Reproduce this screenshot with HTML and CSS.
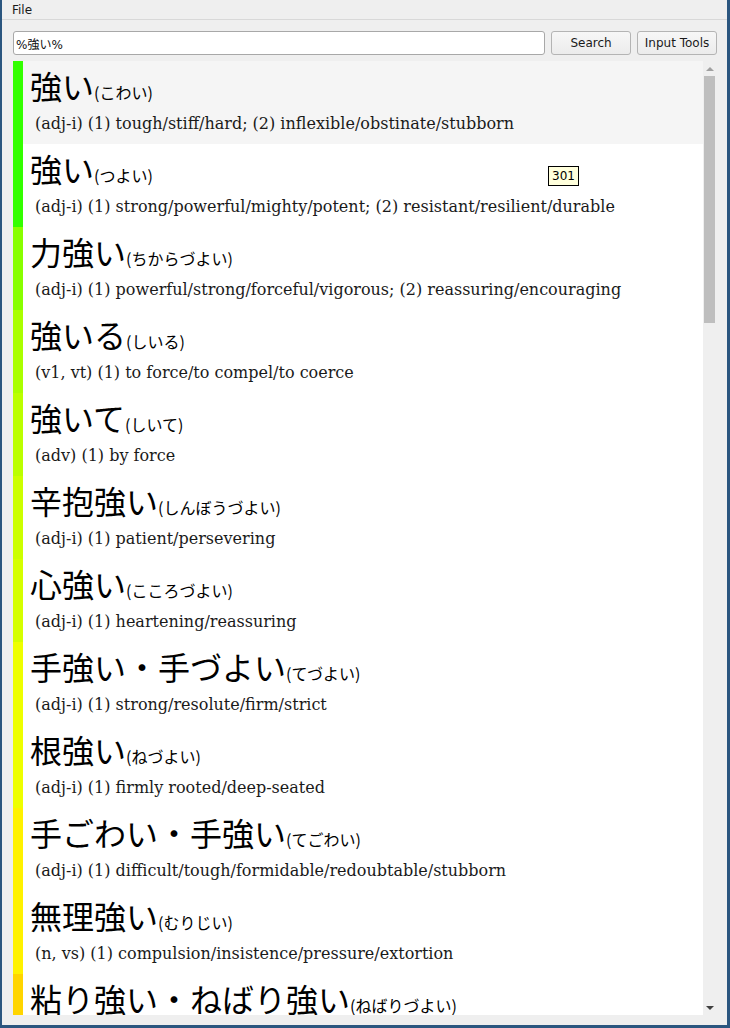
FILE: index.html
```html
<!DOCTYPE html>
<html>
<head>
<meta charset="utf-8">
<link rel="stylesheet" href="styles.css">
</head>
<body>
<div class="window">
  <div class="menubar"><span class="menu-item">File</span></div>
  <div class="toolbar">
    <div class="search-input">%強い%</div>
    <div class="btn">Search</div>
    <div class="btn">Input Tools</div>
  </div>
  <div class="list">
    <div class="entries">
      <div class="entry hover"><div class="bar" style="background:#33ff00"></div><div class="body"><div class="head"><span class="word">強い</span><span class="reading">(こわい)</span></div><div class="def">(adj-i) (1) tough/stiff/hard; (2) inflexible/obstinate/stubborn</div></div></div>
      <div class="entry"><div class="bar" style="background:#33ff00"></div><div class="body"><div class="head"><span class="word">強い</span><span class="reading">(つよい)</span></div><div class="def">(adj-i) (1) strong/powerful/mighty/potent; (2) resistant/resilient/durable</div></div></div>
      <div class="entry"><div class="bar" style="background:#88ff00"></div><div class="body"><div class="head"><span class="word">力強い</span><span class="reading">(ちからづよい)</span></div><div class="def">(adj-i) (1) powerful/strong/forceful/vigorous; (2) reassuring/encouraging</div></div></div>
      <div class="entry"><div class="bar" style="background:#aaff00"></div><div class="body"><div class="head"><span class="word">強いる</span><span class="reading">(しいる)</span></div><div class="def">(v1, vt) (1) to force/to compel/to coerce</div></div></div>
      <div class="entry"><div class="bar" style="background:#bbff00"></div><div class="body"><div class="head"><span class="word">強いて</span><span class="reading">(しいて)</span></div><div class="def">(adv) (1) by force</div></div></div>
      <div class="entry"><div class="bar" style="background:#ccff00"></div><div class="body"><div class="head"><span class="word">辛抱強い</span><span class="reading">(しんぼうづよい)</span></div><div class="def">(adj-i) (1) patient/persevering</div></div></div>
      <div class="entry"><div class="bar" style="background:#d5ff00"></div><div class="body"><div class="head"><span class="word">心強い</span><span class="reading">(こころづよい)</span></div><div class="def">(adj-i) (1) heartening/reassuring</div></div></div>
      <div class="entry"><div class="bar" style="background:#eeff00"></div><div class="body"><div class="head"><span class="word">手強い・手づよい</span><span class="reading">(てづよい)</span></div><div class="def">(adj-i) (1) strong/resolute/firm/strict</div></div></div>
      <div class="entry"><div class="bar" style="background:#eeff00"></div><div class="body"><div class="head"><span class="word">根強い</span><span class="reading">(ねづよい)</span></div><div class="def">(adj-i) (1) firmly rooted/deep-seated</div></div></div>
      <div class="entry"><div class="bar" style="background:#fff200"></div><div class="body"><div class="head"><span class="word">手ごわい・手強い</span><span class="reading">(てごわい)</span></div><div class="def">(adj-i) (1) difficult/tough/formidable/redoubtable/stubborn</div></div></div>
      <div class="entry"><div class="bar" style="background:#fff200"></div><div class="body"><div class="head"><span class="word">無理強い</span><span class="reading">(むりじい)</span></div><div class="def">(n, vs) (1) compulsion/insistence/pressure/extortion</div></div></div>
      <div class="entry"><div class="bar" style="background:#ffd500"></div><div class="body"><div class="head"><span class="word">粘り強い・ねばり強い</span><span class="reading">(ねばりづよい)</span></div><div class="def">(adj-i) (1) tenacious/persevering/persistent</div></div></div>
    </div>
    <div class="scrollbar">
      <div class="arrow up"></div>
      <div class="track"><div class="thumb"></div></div>
      <div class="arrow down"></div>
    </div>
  </div>
  <div class="tooltip">301</div>
</div>
</body>
</html>
```
FILE: styles.css
```css
html, body {
  margin: 0;
  padding: 0;
}
body {
  background: #efefef;
  font-family: "DejaVu Sans", sans-serif;
}
.window {
  position: relative;
  width: 730px;
  height: 1028px;
  box-sizing: border-box;
  border-left: 2px solid #2b567f;
  border-right: 3px solid #2b567f;
  border-bottom: 3px solid #2b567f;
  background: #efefef;
  display: flex;
  flex-direction: column;
  overflow: hidden;
}
.menubar {
  height: 19px;
  border-bottom: 1px solid #d8d8d8;
  display: flex;
  align-items: center;
  font-size: 12px;
  color: #1a1a1a;
  flex: none;
}
.menu-item {
  padding-left: 10px;
}
.toolbar {
  flex: none;
  display: flex;
  gap: 6px;
  padding: 11px 10px 0 11px;
  height: 24px;
}
.search-input {
  flex: 1;
  background: #fff;
  border: 1px solid #a8a8a8;
  border-radius: 3px;
  font-family: "DejaVu Sans", "Noto Sans CJK JP", sans-serif;
  font-size: 12px;
  color: #111;
  display: flex;
  align-items: center;
  padding-left: 2px;
}
.btn {
  width: 78px;
  border: 1px solid #b4b4b4;
  border-radius: 3px;
  background: linear-gradient(#f7f7f7, #ececec);
  font-size: 12px;
  color: #1a1a1a;
  display: flex;
  align-items: center;
  justify-content: center;
}
.list {
  flex: 1;
  margin: 6px 11px 10px 11px;
  display: flex;
  min-height: 0;
}
.entries {
  flex: 1;
  background: #fff;
  overflow: hidden;
}
.entry {
  display: flex;
  height: 83px;
}
.entry.hover {
  background: #f5f5f5;
}
.bar {
  width: 10px;
  flex: none;
}
.body {
  padding-left: 7px;
  min-width: 0;
}
.head {
  height: 45px;
  display: flex;
  align-items: flex-end;
  white-space: nowrap;
  font-family: "Noto Sans CJK JP", sans-serif;
  color: #000;
}
.word {
  font-size: 32px;
  line-height: 41px;
}
.reading {
  font-size: 16px;
  line-height: 28px;
}
.def {
  font-family: "DejaVu Serif", serif;
  font-size: 16px;
  line-height: 20px;
  padding-left: 5px;
  margin-top: 8px;
  color: #1a1a1a;
  white-space: nowrap;
}
.scrollbar {
  width: 13px;
  flex: none;
  background: #efefef;
  display: flex;
  flex-direction: column;
  align-items: center;
}
.arrow {
  width: 0;
  height: 0;
  border-left: 4px solid transparent;
  border-right: 4px solid transparent;
  flex: none;
}
.arrow.up {
  margin-top: 6px;
  border-bottom: 4px solid #a0a0a0;
}
.arrow.down {
  margin-bottom: 5px;
  border-top: 4px solid #404040;
}
.track {
  flex: 1;
  width: 11px;
  padding: 5px 0;
}
.thumb {
  height: 247px;
  background: #bebebe;
}
.tooltip {
  position: absolute;
  left: 546px;
  top: 166px;
  background: #ffffdc;
  border: 1px solid #000;
  font-size: 12px;
  padding: 2px 3px;
  line-height: 14px;
  color: #000;
}
```
